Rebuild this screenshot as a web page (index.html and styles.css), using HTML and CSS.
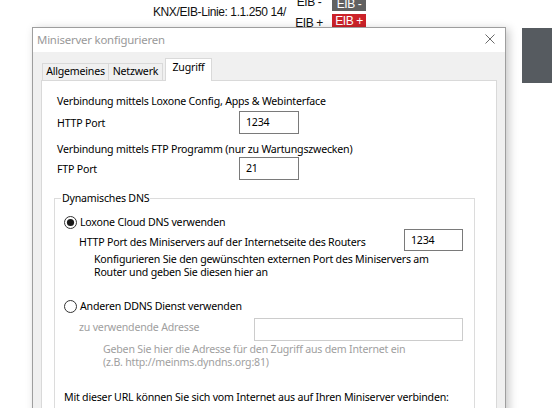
FILE: index.html
```html
<!DOCTYPE html>
<html lang="de">

<head>
    <meta charset="UTF-8">
    <title>Miniserver konfigurieren</title>
    <link rel="stylesheet" href="styles.css">
</head>

<body>
    <div class="topbar">
        <div class="lineLabel">KNX/EIB-Linie: 1.1.250 14/</div>
        <div class="eibLabels">
            <span>EIB -</span>
            <span>EIB +</span>
        </div>
        <div class="eibBtns">
            <span class="btnMinus">EIB -</span>
            <span class="btnPlus">EIB +</span>
        </div>
    </div>

    <div class="stage">
        <div class="dialog">
            <div class="titlebar">
                <span class="title">Miniserver konfigurieren</span>
                <svg class="close" width="10" height="10" viewBox="0 0 10 10">
                    <path d="M0.5 0.5L9.5 9.5M9.5 0.5L0.5 9.5" stroke="#6b6b6b" stroke-width="1" fill="none" />
                </svg>
            </div>
            <div class="dlgBody">
                <div class="tabs">
                    <div class="tab tabFirst">Allgemeines</div>
                    <div class="tab tabSecond">Netzwerk</div>
                    <div class="tab tabActive">Zugriff</div>
                </div>
                <div class="panel">
                    <div class="line first">Verbindung mittels Loxone Config, Apps &amp; Webinterface</div>
                    <div class="portRow">
                        <span class="portLabel">HTTP Port</span>
                        <div class="input portInput">1234</div>
                    </div>
                    <div class="line ftpLine">Verbindung mittels FTP Programm (nur zu Wartungszwecken)</div>
                    <div class="portRow">
                        <span class="portLabel">FTP Port</span>
                        <div class="input portInput">21</div>
                    </div>

                    <fieldset class="group">
                        <legend>Dynamisches DNS</legend>

                        <div class="radio radioFirst">
                            <svg width="13" height="13" viewBox="0 0 13 13">
                                <circle cx="6.5" cy="6.5" r="6" fill="#fff" stroke="#333" stroke-width="1" />
                                <circle cx="6.5" cy="6.5" r="3.6" fill="#1a1a1a" />
                            </svg>
                            <span>Loxone Cloud DNS verwenden</span>
                        </div>
                        <div class="optRow">
                            <span class="optLabel">HTTP Port des Miniservers auf der Internetseite des Routers</span>
                            <div class="input smallInput">1234</div>
                        </div>
                        <div class="hint">Konfigurieren Sie den gewünschten externen Port des Miniservers am<br>Router und geben Sie diesen hier an</div>

                        <div class="radio radioSecond">
                            <svg width="13" height="13" viewBox="0 0 13 13">
                                <circle cx="6.5" cy="6.5" r="6" fill="#fff" stroke="#333" stroke-width="1" />
                            </svg>
                            <span>Anderen DDNS Dienst verwenden</span>
                        </div>
                        <div class="optRow disabledRow">
                            <span class="optLabel addrLabel">zu verwendende Adresse</span>
                            <div class="input wideInput"></div>
                        </div>
                        <div class="hint hintGray">Geben Sie hier die Adresse für den Zugriff aus dem Internet ein<br>(z.B. http://meinms.dyndns.org:81)</div>

                        <div class="urlLine">Mit dieser URL können Sie sich vom Internet aus auf Ihren Miniserver verbinden:</div>
                    </fieldset>
                </div>
            </div>
        </div>
        <div class="sideBlock"></div>
    </div>
</body>

</html>
```

FILE: styles.css
```css
body {
    margin: 0;
    width: 552px;
    height: 408px;
    overflow: hidden;
    background: #fff;
    font: 10.6px "Noto Sans", "Open Sans", sans-serif;
    letter-spacing: -0.2px;
    color: #000;
}

/* background app strip */
.topbar {
    display: flex;
    height: 27px;
    overflow: hidden;
    padding-left: 153px;
    font: 12px "Liberation Sans", Arial, sans-serif;
    letter-spacing: -0.4px;
    color: #111;
}

.lineLabel {
    width: 137px;
    margin-top: 5px;
    line-height: 14px;
    white-space: nowrap;
}

.eibLabels {
    display: flex;
    flex-direction: column;
    width: 38px;
    margin-top: -8px;
    line-height: 21px;
    text-align: center;
}

.eibBtns {
    display: flex;
    flex-direction: column;
    gap: 3px;
    margin-left: 4px;
    margin-top: -3px;
}

.eibBtns span {
    display: block;
    width: 34px;
    height: 14px;
    line-height: 14px;
    text-align: center;
    color: #fff;
}

.btnMinus {
    background: #616161;
}

.btnPlus {
    height: 20px !important;
    background: #cc2229;
}

.stage {
    display: flex;
    align-items: flex-start;
}

/* dialog window */
.dialog {
    box-sizing: border-box;
    width: 474px;
    height: 400px;
    margin-left: 32px;
    border: 1px solid #9e9e9e;
    background: #f0f0f0;
    box-shadow: 3px 2px 9px rgba(0, 0, 0, 0.22);
}

.sideBlock {
    width: 30px;
    height: 55px;
    margin-top: 1px;
    margin-left: 16px;
    background: #565b60;
}

.titlebar {
    display: flex;
    align-items: center;
    justify-content: space-between;
    height: 24px;
    padding: 0 10px 0 4px;
    background: #fff;
}

.title {
    font-size: 11.4px;
    color: #999;
    margin-top: -2px;
}

.close {
    margin-top: -2px;
}

.dlgBody {
    padding: 6px 8px 0;
}

.tabs {
    display: flex;
    align-items: flex-end;
    height: 22px;
    padding-left: 1px;
}

.tab {
    box-sizing: border-box;
    height: 17px;
    line-height: 15px;
    border: 1px solid #d9d9d9;
    border-bottom: none;
    background: #f0f0f0;
    text-align: center;
    white-space: nowrap;
}

.tabFirst {
    width: 67px;
}

.tabSecond {
    width: 55px;
    margin-left: -1px;
}

.tabActive {
    position: relative;
    z-index: 1;
    width: 47px;
    height: 23px;
    margin-left: 2px;
    margin-bottom: -1px;
    padding-top: 1px;
    background: #fff;
}

.panel {
    height: 340px;
    border: 1px solid #d9d9d9;
    background: #fff;
}

.line {
    padding-left: 15px;
    line-height: 16px;
}

.first {
    margin-top: 12px;
}

.ftpLine {
    margin-top: 7px;
}

.portRow {
    display: flex;
    margin-top: 2px;
    padding-left: 15px;
}

.portRow + .ftpLine + .portRow {
    margin-top: 0;
}

.portLabel {
    width: 182px;
    padding-top: 4px;
    line-height: 16px;
}

.input {
    box-sizing: border-box;
    height: 23px;
    padding: 0 6px;
    line-height: 20px;
    border: 1px solid #7a7a7a;
    background: #fff;
}

.portInput {
    width: 60px;
}

.group {
    box-sizing: border-box;
    width: 421px;
    height: 260px;
    margin: 10px 0 0 12px;
    padding: 0;
    border: 1px solid #dcdcdc;
}

.group legend {
    margin-left: 6px;
    padding: 0 1px;
    line-height: 16px;
}

.radio {
    display: flex;
    align-items: center;
    gap: 3px;
    height: 14px;
    padding-left: 9px;
}

.radioFirst {
    margin-top: 9px;
}

.radioSecond {
    margin-top: 20px;
}

.optRow {
    display: flex;
    padding-left: 24px;
}

.optLabel {
    width: 325px;
    padding-top: 5px;
    line-height: 16px;
    white-space: nowrap;
}

.smallInput {
    width: 59px;
    height: 22px;
}

.hint {
    margin-top: 2px;
    padding-left: 39px;
    line-height: 13px;
    white-space: nowrap;
}

.disabledRow {
    margin-top: 5px;
}

.addrLabel {
    width: 175px;
    padding-top: 1px;
    color: #a0a0a0;
}

.wideInput {
    width: 209px;
    border-color: #cccccc;
}

.hintGray {
    padding-left: 48px;
    color: #a0a0a0;
}

.urlLine {
    margin-top: 20px;
    padding-left: 9px;
    line-height: 16px;
    white-space: nowrap;
}
```
